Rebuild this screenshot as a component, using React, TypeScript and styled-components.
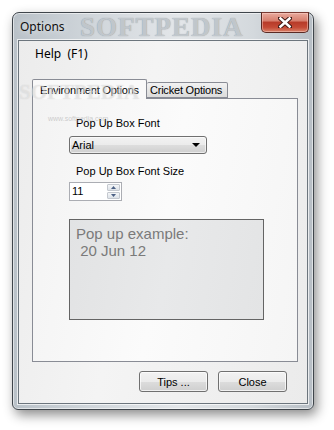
import React from "react";
import styled, { createGlobalStyle } from "styled-components";

const Global = createGlobalStyle`
  html, body { margin: 0; padding: 0; background: #ffffff; }
  body { width: 334px; height: 430px; overflow: hidden; }
`;

const Page = styled.div`
  padding: 12px 0 0 12px;
`;

const Window = styled.div`
  position: relative;
  box-sizing: border-box;
  width: 302px;
  height: 398px;
  border: 1px solid #3f454b;
  border-radius: 7px 7px 6px 6px;
  background: linear-gradient(90deg, #b9c1c8 0%, #cfd5da 25%, #e3e6e9 55%, #d4d9dd 80%, #b7bec5 100%);
  box-shadow: 3px 5px 12px rgba(0, 0, 0, 0.45), inset 0 0 0 1px rgba(255,255,255,0.55);
  display: flex;
  flex-direction: column;
`;

const TitleBar = styled.div`
  position: relative;
  height: 27px;
  display: flex;
  align-items: flex-start;
  justify-content: space-between;
`;

const Title = styled.span`
  font-family: "Noto Sans", "Open Sans", sans-serif;
  font-size: 12px;
  color: #101010;
  margin: 5px 0 0 7px;
  text-shadow: 0 0 6px rgba(255,255,255,0.9);
`;

const TitleMark = styled.span`
  position: absolute;
  left: 67px;
  top: -1px;
  font-family: "Liberation Serif", "DejaVu Serif", serif;
  font-weight: bold;
  font-size: 27px;
  letter-spacing: 1px;
  color: rgba(200, 206, 211, 0.9);
  text-shadow: 0 0 1px rgba(120, 126, 132, 0.8);
  pointer-events: none;
`;

const CloseBtn = styled.div`
  box-sizing: border-box;
  width: 48px;
  height: 21px;
  margin: -1px 4px 0 0;
  border: 1px solid #5a2a24;
  border-top: 1px solid #7a3a32;
  border-radius: 0 0 5px 5px;
  background: linear-gradient(180deg, #e9aa9d 0%, #d7806f 40%, #b83c2a 50%, #c44a35 75%, #d9826a 100%);
  box-shadow: inset 0 0 0 1px rgba(255,220,210,0.45);
  display: flex;
  align-items: center;
  justify-content: center;
`;

const Client = styled.div`
  box-sizing: border-box;
  margin: 0 5px 5px 5px;
  flex: 1;
  border: 1px solid #6c757d;
  box-shadow: 0 0 0 1px rgba(255,255,255,0.7);
  background: linear-gradient(100deg, #ececec 0%, #f4f4f4 40%, #f0f0f0 70%, #ebebeb 100%);
  display: flex;
  flex-direction: column;
`;

const MenuBar = styled.div`
  height: 24px;
  display: flex;
  align-items: center;
  padding-left: 16px;
  font-family: "Noto Sans", "Open Sans", sans-serif;
  font-size: 12px;
  color: #000;
`;

const Body = styled.div`
  position: relative;
  padding: 14px 9px 0 13px;
  display: flex;
  flex-direction: column;
`;

const TabStrip = styled.div`
  height: 19px;
  display: flex;
  align-items: flex-end;
`;

const Tab = styled.div<{ $active?: boolean }>`
  box-sizing: border-box;
  height: ${(p) => (p.$active ? "20px" : "16px")};
  margin-bottom: ${(p) => (p.$active ? "-1px" : "0")};
  padding: ${(p) => (p.$active ? "0 7px 0 7px" : "0 5px 0 3px")};
  display: flex;
  align-items: center;
  font-family: "Liberation Sans", Arial, sans-serif;
  font-size: 11px;
  letter-spacing: -0.2px;
  color: #000;
  border: 1px solid #898c95;
  border-bottom: ${(p) => (p.$active ? "none" : "1px solid #898c95")};
  border-left: ${(p) => (p.$active ? "1px solid #898c95" : "none")};
  border-radius: 2px 2px 0 0;
  background: ${(p) =>
    p.$active
      ? "#f9f9f9"
      : "linear-gradient(180deg, #f2f2f2 0%, #e6e6e6 50%, #dcdcdc 100%)"};
  position: relative;
  z-index: ${(p) => (p.$active ? 2 : 1)};
`;

const Panel = styled.div`
  box-sizing: border-box;
  height: 264px;
  border: 1px solid #898c95;
  background: linear-gradient(100deg, #f3f3f3 0%, #fbfbfb 50%, #f5f5f5 100%);
  padding: 18px 0 0 36px;
  display: flex;
  flex-direction: column;
  align-items: flex-start;
  font-family: "Liberation Sans", Arial, sans-serif;
  font-size: 11px;
  color: #000;
`;

const Label = styled.div<{ $gap: number }>`
  margin: ${(p) => p.$gap}px 0 0 7px;
  line-height: 13px;
`;

const Combo = styled.div`
  box-sizing: border-box;
  width: 138px;
  height: 18px;
  margin-top: 6px;
  border: 1px solid #707070;
  border-radius: 3px;
  background: linear-gradient(180deg, #f2f2f2 0%, #ebebeb 50%, #dddddd 51%, #cfcfcf 100%);
  box-shadow: inset 0 0 0 1px rgba(255,255,255,0.6);
  display: flex;
  align-items: center;
  justify-content: space-between;
  padding: 0 6px 0 2px;
`;

const Spin = styled.div`
  box-sizing: border-box;
  width: 53px;
  height: 19px;
  margin-top: 4px;
  border: 1px solid #abadb3;
  background: #fff;
  display: flex;
  align-items: stretch;
  justify-content: space-between;
`;

const SpinText = styled.span`
  padding: 2px 0 0 2px;
`;

const SpinButtons = styled.div`
  width: 13px;
  margin: 1px 1px 1px 0;
  display: flex;
  flex-direction: column;
  gap: 1px;
`;

const SpinButton = styled.div`
  flex: 1;
  border: 1px solid #c4c8cf;
  border-radius: 1px;
  background: linear-gradient(180deg, #f4f6f8, #dde2e8);
  display: flex;
  align-items: center;
  justify-content: center;
`;

const Example = styled.div`
  box-sizing: border-box;
  width: 195px;
  height: 101px;
  margin-top: 18px;
  border: 1px solid #646464;
  background: linear-gradient(100deg, #e2e3e4 0%, #e8e9ea 50%, #e3e4e5 100%);
  padding: 5px 0 0 6px;
  font-size: 15px;
  line-height: 17px;
  color: #7a7a7a;
  white-space: pre;
`;

const ButtonRow = styled.div`
  margin-top: 9px;
  padding-right: 11px;
  display: flex;
  justify-content: flex-end;
  gap: 10px;
`;

const Button = styled.div`
  box-sizing: border-box;
  width: 69px;
  height: 21px;
  border: 1px solid #707070;
  border-radius: 3px;
  background: linear-gradient(180deg, #f2f2f2 0%, #ebebeb 50%, #dddddd 51%, #cfcfcf 100%);
  box-shadow: inset 0 0 0 1px rgba(255,255,255,0.7);
  display: flex;
  align-items: center;
  justify-content: center;
  font-family: "Liberation Sans", Arial, sans-serif;
  font-size: 11px;
  color: #000;
`;

const BodyMark = styled.span`
  position: absolute;
  left: 0px;
  top: 17px;
  font-family: "Liberation Serif", "DejaVu Serif", serif;
  font-weight: bold;
  font-size: 21px;
  line-height: 21px;
  color: rgba(255, 255, 255, 0.35);
  text-shadow: 0 0 1px rgba(170, 170, 170, 0.45);
  pointer-events: none;
  z-index: 3;
`;

const UrlMark = styled.span`
  position: absolute;
  left: 29px;
  top: 50px;
  font-family: "Liberation Sans", Arial, sans-serif;
  font-size: 7px;
  line-height: 7px;
  color: rgba(160, 160, 160, 0.5);
  pointer-events: none;
  z-index: 3;
`;

export default function App() {
  return (
    <>
      <Global />
      <Page>
        <Window>
          <TitleBar>
            <Title>Options</Title>
            <TitleMark>SOFTPEDIA</TitleMark>
            <CloseBtn>
              <svg width="14" height="11" viewBox="0 0 14 11">
                <path
                  d="M2 1 L12 10 M12 1 L2 10"
                  stroke="#3a1410"
                  strokeWidth="4.4"
                  strokeLinecap="square"
                />
                <path
                  d="M2.5 1.5 L11.5 9.5 M11.5 1.5 L2.5 9.5"
                  stroke="#ffffff"
                  strokeWidth="2.6"
                  strokeLinecap="square"
                />
              </svg>
            </CloseBtn>
          </TitleBar>
          <Client>
            <MenuBar>Help&nbsp;&nbsp;(F1)</MenuBar>
            <Body>
              <BodyMark>SOFTPEDIA</BodyMark>
              <UrlMark>www.softpedia.com</UrlMark>
              <TabStrip>
                <Tab $active>Environment Options</Tab>
                <Tab>Cricket Options</Tab>
              </TabStrip>
              <Panel>
                <Label $gap={0}>Pop Up Box Font</Label>
                <Combo>
                  <span>Arial</span>
                  <svg width="8" height="4" viewBox="0 0 8 4">
                    <path d="M0 0 H8 L4 4 Z" fill="#000" />
                  </svg>
                </Combo>
                <Label $gap={11}>Pop Up Box Font Size</Label>
                <Spin>
                  <SpinText>11</SpinText>
                  <SpinButtons>
                    <SpinButton>
                      <svg width="5" height="3" viewBox="0 0 5 3">
                        <path d="M0 3 L2.5 0 L5 3 Z" fill="#4d6185" />
                      </svg>
                    </SpinButton>
                    <SpinButton>
                      <svg width="5" height="3" viewBox="0 0 5 3">
                        <path d="M0 0 L2.5 3 L5 0 Z" fill="#4d6185" />
                      </svg>
                    </SpinButton>
                  </SpinButtons>
                </Spin>
                <Example>{"Pop up example:\n 20 Jun 12"}</Example>
              </Panel>
              <ButtonRow>
                <Button>Tips ...</Button>
                <Button>Close</Button>
              </ButtonRow>
            </Body>
          </Client>
        </Window>
      </Page>
    </>
  );
}
